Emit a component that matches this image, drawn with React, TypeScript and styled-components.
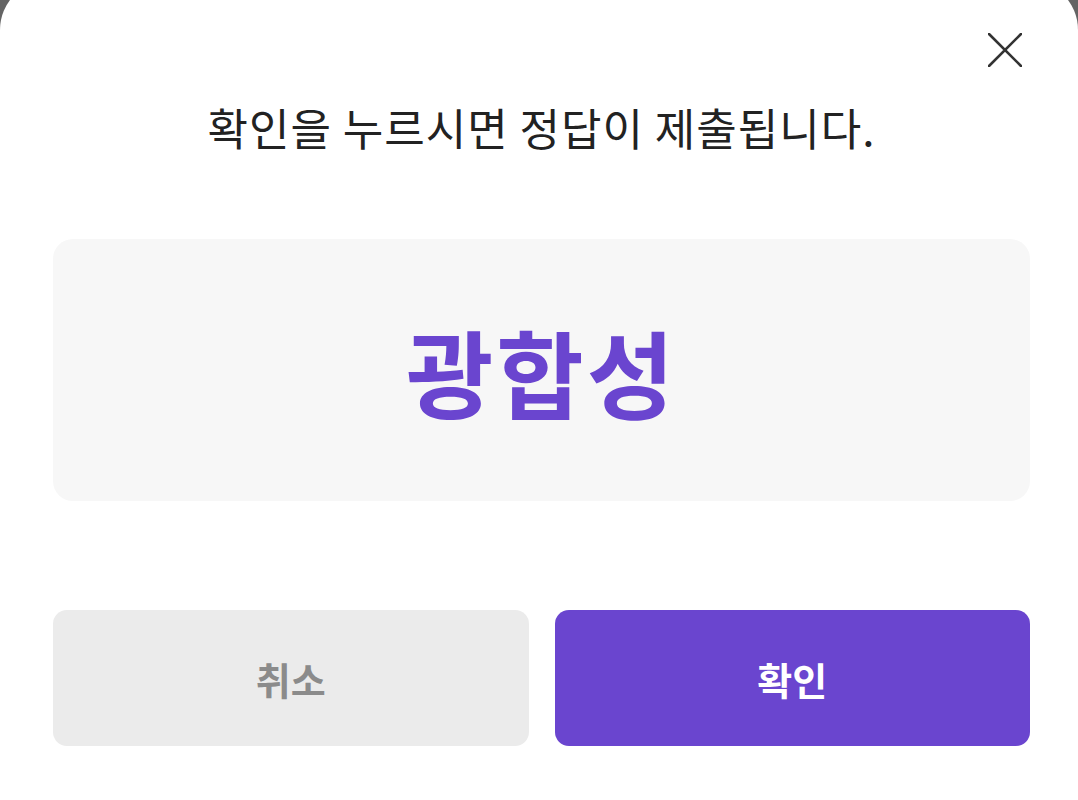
import React from 'react';
import styled, { createGlobalStyle } from 'styled-components';

const colors = {
    backdrop: '#646464',
    sheet: '#ffffff',
    text: '#222222',
    answerBg: '#f7f7f7',
    purple: '#6a45cf',
    cancelBg: '#ebebeb',
    cancelText: '#8b8b8b',
    icon: '#333333',
};

const GlobalStyle = createGlobalStyle`
  html, body {
    margin: 0;
    padding: 0;
    background: ${colors.backdrop};
    overflow: hidden;
  }

  body {
    font-family: "Noto Sans CJK KR", "Noto Sans", sans-serif;
  }
`;

const StyledSheet = styled.div`
  display: flex;
  flex-direction: column;
  box-sizing: border-box;
  width: 100%;
  min-height: 840px;
  margin-top: -20px;
  padding: 45px 48px 0 53px;
  background: ${colors.sheet};
  border-radius: 50px 50px 0 0;
`;

const StyledHeader = styled.div`
  display: flex;
  justify-content: flex-end;
  height: 50px;
`;

const StyledClose = styled.button`
  display: flex;
  align-items: center;
  justify-content: center;
  width: 50px;
  height: 50px;
  padding: 0;
  border: none;
  background: none;
  cursor: pointer;
`;

const StyledTitle = styled.p`
  margin: 24px 0 0;
  font-size: 44px;
  line-height: 56px;
  font-weight: 400;
  color: ${colors.text};
  text-align: center;
  letter-spacing: 1px;
`;

const StyledAnswer = styled.div`
  display: flex;
  align-items: center;
  justify-content: center;
  height: 262px;
  margin-top: 84px;
  background: ${colors.answerBg};
  border-radius: 20px;
  font-size: 95px;
  font-weight: 700;
  letter-spacing: 3px;
  color: ${colors.purple};
`;

const StyledActions = styled.div`
  display: grid;
  grid-template-columns: 1fr 1fr;
  gap: 26px;
  margin-top: 109px;
`;

const StyledButton = styled.button<{ primary?: boolean }>`
  height: 136px;
  border: none;
  border-radius: 14px;
  background: ${({ primary }) => (primary ? colors.purple : colors.cancelBg)};
  color: ${({ primary }) => (primary ? '#ffffff' : colors.cancelText)};
  font-family: inherit;
  font-size: 38px;
  font-weight: 700;
  cursor: pointer;
`;

const CloseIcon = () => (
    <svg width="34" height="34" viewBox="0 0 34 34" fill="none">
        <path d="M1 1L33 33M33 1L1 33" stroke={colors.icon} strokeWidth="2.6" strokeLinecap="round" />
    </svg>
);

export default function App() {
    return (
        <>
            <GlobalStyle />
            <StyledSheet>
                <StyledHeader>
                    <StyledClose aria-label="닫기">
                        <CloseIcon />
                    </StyledClose>
                </StyledHeader>
                <StyledTitle>확인을 누르시면 정답이 제출됩니다.</StyledTitle>
                <StyledAnswer>광합성</StyledAnswer>
                <StyledActions>
                    <StyledButton>취소</StyledButton>
                    <StyledButton primary>확인</StyledButton>
                </StyledActions>
            </StyledSheet>
        </>
    );
}
